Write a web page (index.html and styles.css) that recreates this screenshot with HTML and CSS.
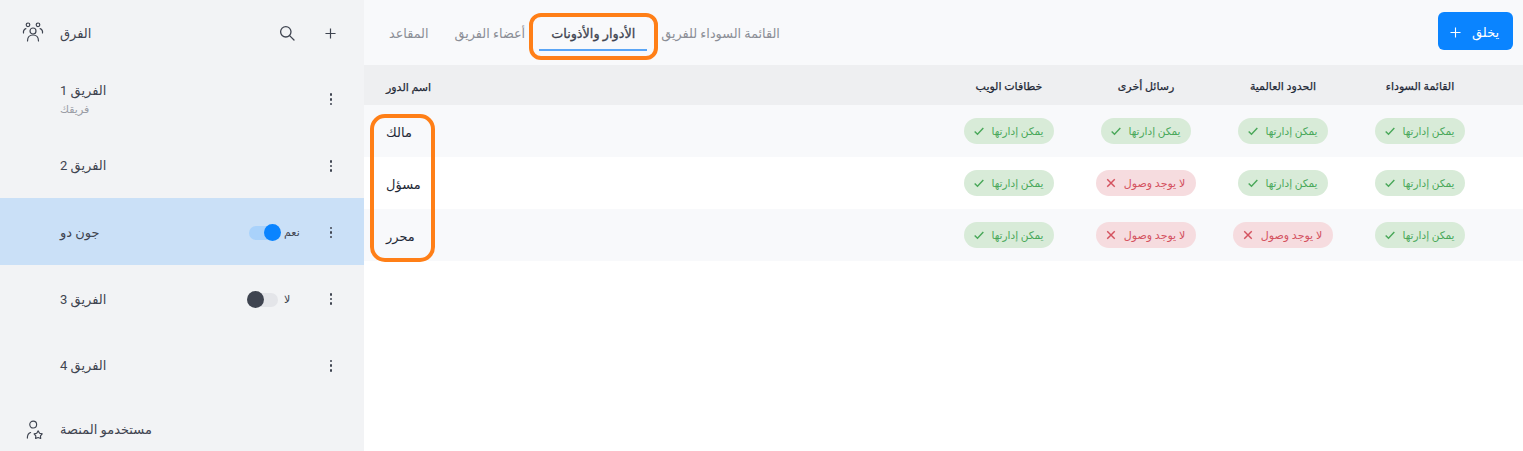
FILE: index.html
```html
<!DOCTYPE html>
<html lang="ar">
<head>
  <meta charset="UTF-8">
  <meta name="viewport" content="width=device-width, initial-scale=1.0">
  <title>الفرق</title>
  <link rel="stylesheet" href="styles.css">
</head>
<body>
  <div class="app">
    <aside class="sidebar">
      <div class="side-head">
        <svg class="side-icon" viewBox="0 0 22 22" fill="none" stroke="currentColor" stroke-width="1.2" stroke-linecap="round">
          <circle cx="11" cy="9" r="3"/>
          <path d="M5.5 19c0-4 2.3-6 5.5-6s5.5 2 5.5 6"/>
          <circle cx="6" cy="2.8" r="1.8"/>
          <circle cx="16" cy="2.8" r="1.8"/>
          <path d="M1.5 11c-.3-2 .4-3.6 2.4-4.4M20.5 11c.3-2-.4-3.6-2.4-4.4"/>
        </svg>
        <span class="side-title">الفرق</span>
        <svg class="search-icon" viewBox="0 0 16 16" fill="none" stroke="currentColor" stroke-width="1.3" stroke-linecap="round">
          <circle cx="6.8" cy="6.8" r="5.2"/>
          <path d="M10.6 10.6l4.4 4.4"/>
        </svg>
        <svg class="plus-icon" viewBox="0 0 12 12" fill="none" stroke="currentColor" stroke-width="1.3">
          <path d="M6 .5v11M.5 6h11"/>
        </svg>
      </div>

      <div class="team-row">
        <div class="team-name">
          <div>الفريق 1</div>
          <div class="team-sub">فريقك</div>
        </div>
        <span class="kebab"><i></i><i></i><i></i></span>
      </div>
      <div class="team-row">
        <div class="team-name">الفريق 2</div>
        <span class="kebab"><i></i><i></i><i></i></span>
      </div>
      <div class="team-row selected">
        <div class="team-name">جون دو</div>
        <span class="switch on"></span>
        <span class="switch-label">نعم</span>
        <span class="kebab"><i></i><i></i><i></i></span>
      </div>
      <div class="team-row">
        <div class="team-name">الفريق 3</div>
        <span class="switch"></span>
        <span class="switch-label">لا</span>
        <span class="kebab"><i></i><i></i><i></i></span>
      </div>
      <div class="team-row">
        <div class="team-name">الفريق 4</div>
        <span class="kebab"><i></i><i></i><i></i></span>
      </div>

      <div class="side-foot">
        <svg class="foot-icon" viewBox="0 0 20 22" fill="none" stroke="currentColor" stroke-width="1.3" stroke-linecap="round" stroke-linejoin="round">
          <circle cx="8" cy="5" r="3.8"/>
          <path d="M1.5 20c0-3.5 1-5.4 3.6-6.2"/>
          <path d="M13.5 12l1.6 2.6 2.9.7-1.9 2.2.2 2.9-2.8-1.1-2.8 1.1.2-2.9-1.9-2.2 2.9-.7z"/>
        </svg>
        <span class="foot-title">مستخدمو المنصة</span>
      </div>
    </aside>

    <main class="content">
      <div class="topbar">
        <nav class="tabs">
          <a class="tab">المقاعد</a>
          <a class="tab">أعضاء الفريق</a>
          <a class="tab active">الأدوار والأذونات</a>
          <a class="tab">القائمة السوداء للفريق</a>
        </nav>
        <button class="create-btn">
          <svg viewBox="0 0 12 12" fill="none" stroke="currentColor" stroke-width="1.2"><path d="M6 .5v11M.5 6h11"/></svg>
          <span>يخلق</span>
        </button>
      </div>

      <div class="grid-row grid-head">
        <div class="role-cell">اسم الدور</div>
        <div>خطافات الويب</div>
        <div>رسائل أخرى</div>
        <div>الحدود العالمية</div>
        <div>القائمة السوداء</div>
      </div>

      <div class="grid-row alt">
        <div class="role-cell">مالك</div>
        <div><span class="pill yes"><svg viewBox="0 0 12 12"><path d="M.8 6.5l3.4 3.4 7-7.6"/></svg>يمكن إدارتها</span></div>
        <div><span class="pill yes"><svg viewBox="0 0 12 12"><path d="M.8 6.5l3.4 3.4 7-7.6"/></svg>يمكن إدارتها</span></div>
        <div><span class="pill yes"><svg viewBox="0 0 12 12"><path d="M.8 6.5l3.4 3.4 7-7.6"/></svg>يمكن إدارتها</span></div>
        <div><span class="pill yes"><svg viewBox="0 0 12 12"><path d="M.8 6.5l3.4 3.4 7-7.6"/></svg>يمكن إدارتها</span></div>
      </div>
      <div class="grid-row">
        <div class="role-cell">مسؤل</div>
        <div><span class="pill yes"><svg viewBox="0 0 12 12"><path d="M.8 6.5l3.4 3.4 7-7.6"/></svg>يمكن إدارتها</span></div>
        <div><span class="pill no"><svg viewBox="0 0 12 12"><path d="M1.5 1.5l9 9M10.5 1.5l-9 9"/></svg>لا يوجد وصول</span></div>
        <div><span class="pill yes"><svg viewBox="0 0 12 12"><path d="M.8 6.5l3.4 3.4 7-7.6"/></svg>يمكن إدارتها</span></div>
        <div><span class="pill yes"><svg viewBox="0 0 12 12"><path d="M.8 6.5l3.4 3.4 7-7.6"/></svg>يمكن إدارتها</span></div>
      </div>
      <div class="grid-row alt">
        <div class="role-cell">محرر</div>
        <div><span class="pill yes"><svg viewBox="0 0 12 12"><path d="M.8 6.5l3.4 3.4 7-7.6"/></svg>يمكن إدارتها</span></div>
        <div><span class="pill no"><svg viewBox="0 0 12 12"><path d="M1.5 1.5l9 9M10.5 1.5l-9 9"/></svg>لا يوجد وصول</span></div>
        <div><span class="pill no"><svg viewBox="0 0 12 12"><path d="M1.5 1.5l9 9M10.5 1.5l-9 9"/></svg>لا يوجد وصول</span></div>
        <div><span class="pill yes"><svg viewBox="0 0 12 12"><path d="M.8 6.5l3.4 3.4 7-7.6"/></svg>يمكن إدارتها</span></div>
      </div>

      <div class="mark mark-tab"></div>
      <div class="mark mark-roles"></div>
    </main>
  </div>
</body>
</html>
```

FILE: styles.css
```css
* {
  box-sizing: border-box;
}

body {
  margin: 0;
  font-family: Roboto, "Noto Sans", "DejaVu Sans", sans-serif;
  font-size: 13px;
  color: #3f4450;
  background-color: #fff;
  overflow: hidden;
}

.app {
  display: flex;
  height: 451px;
}

/* sidebar */
.sidebar {
  width: 364px;
  background-color: #f2f3f5;
  display: flex;
  flex-direction: column;
}

.side-head {
  height: 65px;
  display: flex;
  align-items: center;
  padding: 2px 28px 0 22px;
}

.side-icon {
  width: 22px;
  height: 22px;
  margin-right: 16px;
  flex-shrink: 0;
}

.side-title {
  flex: 1;
}

.search-icon {
  width: 16px;
  height: 16px;
  margin-right: 30px;
}

.plus-icon {
  width: 11px;
  height: 11px;
}

.team-row {
  height: 66.7px;
  display: flex;
  align-items: center;
  padding: 2px 25px 0 60px;
}

.team-row.selected {
  background-color: #cae0f7;
}

.team-name {
  flex: 1;
}

.team-sub {
  font-size: 11px;
  color: #9a9da5;
  margin-top: 5px;
}

.switch {
  position: relative;
  width: 34px;
  height: 17px;
}

.switch::before {
  content: "";
  position: absolute;
  left: 2px;
  right: 3px;
  top: 2px;
  bottom: 1px;
  border-radius: 8px;
  background-color: #e4e5e9;
}

.switch::after {
  content: "";
  position: absolute;
  left: 0;
  top: 0;
  width: 17px;
  height: 17px;
  border-radius: 50%;
  background-color: #3f4450;
}

.switch.on::before {
  background-color: #a9d2fb;
}

.switch.on::after {
  left: 17px;
  background-color: #0a84ff;
}

.switch-label {
  width: 30px;
  margin-left: 3px;
  margin-right: 9px;
  font-size: 11px;
}

.kebab {
  width: 16px;
  display: flex;
  flex-direction: column;
  align-items: center;
  gap: 2px;
}

.kebab i {
  width: 2.6px;
  height: 2.6px;
  border-radius: 50%;
  background-color: #3f4450;
}

.side-foot {
  display: flex;
  align-items: center;
  padding: 10px 0 0 26px;
  height: 53px;
}

.foot-icon {
  width: 18px;
  height: 20px;
  margin-right: 16px;
  flex-shrink: 0;
}

/* main area */
.content {
  position: relative;
  flex: 1;
}

.topbar {
  height: 65px;
  display: flex;
  align-items: center;
  justify-content: space-between;
  padding: 0 10px 0 13px;
  background-color: #f8f9fb;
}

.tabs {
  display: flex;
  gap: 2px;
}

.tab {
  padding: 11px 12px 8px;
  font-size: 12.8px;
  color: #8b8e96;
  border-bottom: 2px solid transparent;
}

.tab.active {
  color: #3f4450;
  font-weight: 500;
  -webkit-text-stroke: 0.3px #3f4450;
  border-bottom-color: #5aa5f5;
}

.create-btn {
  display: flex;
  align-items: center;
  gap: 11px;
  height: 38px;
  width: 75px;
  margin-bottom: 3px;
  padding: 3px 0 0 12px;
  border: none;
  border-radius: 6px;
  background-color: #0a84ff;
  color: #fff;
  font: inherit;
}

.create-btn svg {
  width: 11px;
  height: 11px;
}

.grid-row {
  display: grid;
  grid-template-columns: 1fr repeat(4, 137px);
  align-items: center;
  height: 52px;
  padding: 0 34.5px 0 22px;
  text-align: center;
  color: #1f2937;
}

.grid-row.alt {
  background-color: #f8f9fb;
}

.grid-head {
  height: 40px;
  padding-top: 2px;
  background-color: #eeeff1;
  font-size: 11px;
  font-weight: 500;
  -webkit-text-stroke: 0.25px #1f2937;
}

.role-cell {
  text-align: left;
  padding-top: 2px;
}

.pill {
  display: inline-flex;
  align-items: center;
  gap: 8px;
  height: 26px;
  padding: 0 11px 0 10px;
  border-radius: 13px;
  font-size: 10.5px;
}

.pill svg {
  width: 10px;
  height: 10px;
  fill: none;
  stroke: currentColor;
  stroke-width: 1.7;
}

.pill.yes {
  background-color: #d8ebd8;
  color: #4aa85a;
}

.pill.no {
  font-size: 11px;
  background-color: #f6dcdf;
  color: #d4525f;
}

/* orange highlights drawn on the screenshot */
.mark {
  position: absolute;
  border: 4px solid #ff7f17;
  border-radius: 12px;
  pointer-events: none;
}

.mark-tab {
  left: 165px;
  top: 13px;
  width: 129px;
  height: 47px;
}

.mark-roles {
  left: 6px;
  top: 114px;
  width: 65px;
  height: 148px;
  border-radius: 15px;
}
```
